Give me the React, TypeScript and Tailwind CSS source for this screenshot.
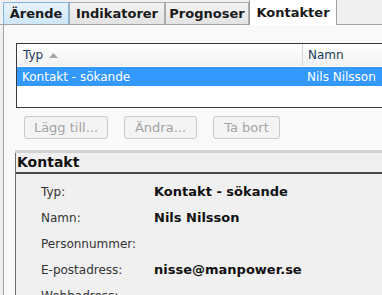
import React from 'react';

const tabs = [
    { label: 'Ärende', w: 'w-[66px]', state: 'hover' },
    { label: 'Indikatorer', w: 'w-[96px]', state: 'normal' },
    { label: 'Prognoser', w: 'w-[84px]', state: 'normal' },
    { label: 'Kontakter', w: 'w-[88px]', state: 'active' },
];

const rows = [
    { label: 'Typ:', value: 'Kontakt - sökande' },
    { label: 'Namn:', value: 'Nils Nilsson' },
    { label: 'Personnummer:', value: '' },
    { label: 'E-postadress:', value: 'nisse@manpower.se' },
    { label: 'Webbadress:', value: '' },
];

function Tab({ label, w, state }: { label: string; w: string; state: string }) {
    if (state === 'active') {
        return (
            <div className={`${w} h-[26px] -mb-px flex items-center justify-center bg-white border border-b-0 border-[#a0a0a0] text-[13px] font-bold text-[#1a1a1a]`}>
                {label}
            </div>
        );
    }
    const bg = state === 'hover'
        ? 'bg-gradient-to-b from-[#e9f4fc] to-[#cde6f7] border-[#7eb4ea]'
        : 'bg-gradient-to-b from-[#f3f3f3] to-[#e3e3e3] border-[#acacac]';
    return (
        <div className={`${w} h-[22px] flex items-center justify-center border border-b-0 ${bg} text-[13px] font-bold text-[#1a1a1a]`}>
            {label}
        </div>
    );
}

function DisabledButton({ children, w }: { children: React.ReactNode; w: string }) {
    return (
        <div className={`${w} h-[23px] flex items-center justify-center rounded-[3px] border border-[#c9c9c9] bg-[#f4f4f4] text-[13px] text-[#a3a3a3]`}>
            {children}
        </div>
    );
}

export default function App() {
    return (
        <div className="w-[382px] h-[295px] overflow-hidden bg-[#f0f0f0] font-['DejaVu_Sans',sans-serif] text-black">
            <div className="flex items-end h-[25px] pl-[3px] border-b border-[#a0a0a0]">
                {tabs.map((t) => (
                    <Tab key={t.label} {...t} />
                ))}
            </div>

            <div className="ml-[3px] h-[270px] border-l border-[#a0a0a0] bg-[#f9f9f9] pl-[12px] pt-[18px]">
                <div className="w-[400px] h-[65px] border border-[#3a3a3a] bg-white">
                    <div className="flex h-[22px] bg-gradient-to-b from-[#ffffff] to-[#f1f2f4] text-[12px] text-[#1e395b]">
                        <div className="w-[286px] flex items-center gap-[6px] pl-[6px] border-r border-[#d5d5d5]">
                            <span>Typ</span>
                            <svg width="9" height="5" viewBox="0 0 9 5">
                                <path d="M0 5 L4.5 0 L9 5 Z" fill="#a7a7a7" />
                            </svg>
                        </div>
                        <div className="flex items-center pl-[5px]">Namn</div>
                    </div>
                    <div className="flex h-[19px] mt-px bg-[#3399ff] text-[12px] text-white">
                        <div className="w-[286px] pl-[5px] flex items-center">Kontakt - sökande</div>
                        <div className="pl-[4px] flex items-center">Nils Nilsson</div>
                    </div>
                </div>

                <div className="flex gap-[16px] ml-[8px] mt-[8px]">
                    <DisabledButton w="w-[84px]">Lägg till...</DisabledButton>
                    <DisabledButton w="w-[73px]">Ändra...</DisabledButton>
                    <DisabledButton w="w-[67px]">Ta bort</DisabledButton>
                </div>

                <div className="mt-[11px] -ml-[1px] w-[380px] border-t-[3px] border-[#d2d2d2]">
                    <div className="border-l border-[#6e6e6e] bg-[#f0f0f0]">
                        <div className="h-[21px] flex items-center pl-[1px] border-b-2 border-[#4a4a4a] text-[14px] font-bold text-[#111]">
                            Kontakt
                        </div>
                        <div className="pt-[5px]">
                            {rows.map((r) => (
                                <div key={r.label} className="flex items-center h-[26px]">
                                    <div className="w-[138px] pl-[25px] text-[12px] text-[#333]">{r.label}</div>
                                    <div className="text-[13px] font-bold text-[#111]">{r.value}</div>
                                </div>
                            ))}
                        </div>
                    </div>
                </div>
            </div>
        </div>
    );
}
